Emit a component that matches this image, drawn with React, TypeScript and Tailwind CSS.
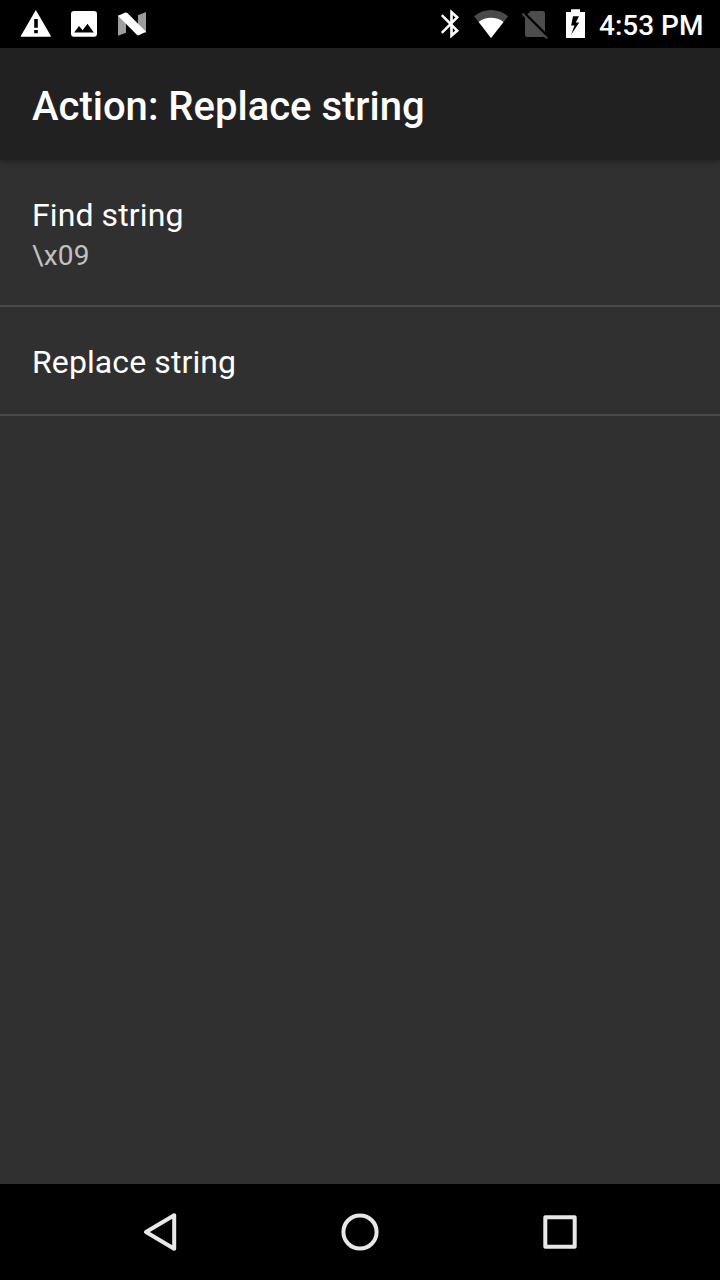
import React from "react";

function StatusBar() {
  return (
    <header className="flex h-12 shrink-0 items-center justify-between bg-black pr-4 text-white">
      <div className="flex h-12 pl-3">
        <svg className="h-12 w-12" viewBox="12 0 48 48" fill="currentColor" aria-label="Warning">
          <path fillRule="evenodd" d="M35.8 10 L50.9 36.1 Q51 36.8 50.2 36.8 H21.4 Q20.6 36.8 20.8 36 Z M34.2 19 H37.8 V27.8 H34.2 Z M34.2 30 H37.8 V33.2 H34.2 Z" />
        </svg>
        <svg className="h-12 w-12" viewBox="60 0 48 48" fill="currentColor" aria-label="Screenshot">
          <path fillRule="evenodd" d="M74 11 H94 Q97 11 97 14 V33.8 Q97 36.8 94 36.8 H74 Q71 36.8 71 33.8 V14 Q71 11 74 11 Z M74.2 32.5 H93.8 L87.5 23.8 L82.6 30.2 L79.1 26 Z" />
        </svg>
        <svg className="h-12 w-12" viewBox="108 0 48 48" fill="currentColor" aria-label="Android N">
          <path fill="#9d9d9d" d="M118 15 L126 22 V32.7 L118 35.8 Z M138 15.2 L146 12 V33 L138 29 Z" />
          <path d="M118 15.8 L125.5 12.4 Q126.6 12.3 127.4 13.1 L146 31.8 L138.8 35.3 Q137.6 35.6 136.8 34.8 Z" />
        </svg>
      </div>
      <div className="flex h-12 items-center">
        <svg className="h-12 w-10" viewBox="430 0 40 48" fill="none" stroke="currentColor" strokeWidth="2.6" aria-label="Bluetooth">
          <path d="M441.8 15.2 L457.2 30.6 L451.5 35.6 V12.2 L457.2 17.4 L441.8 32.8" />
        </svg>
        <svg className="h-12 w-[42px]" viewBox="470 0 42 48" fill="currentColor" aria-label="Wi-Fi">
          <path fill="#4a4a4a" d="M474 16.2 Q482 10 491 10 Q500 10 508.2 16.2 L491 38 Z" />
          <path d="M491 38 L478.7 22 Q484 17.8 491 17.8 Q498 17.8 503.5 22 Z" />
        </svg>
        <svg className="h-12 w-[46px]" viewBox="512 0 46 48" fill="#4d4d4d" aria-label="No SIM">
          <path d="M530.8 11 H542.2 Q545 11 545 13.8 V31.7 L527.3 14.2 Z M525 16.2 L545.2 36.4 Q544.5 37 543 37 H527.6 Q525 37 525 34.2 Z" />
          <path d="M522.5 13.7 L547 38.2" stroke="#4d4d4d" strokeWidth="2.2" />
          <path d="M525.7 14.2 L545.6 34.1" stroke="black" strokeWidth="1.6" />
        </svg>
        <svg className="h-12 w-[41px]" viewBox="558 0 41 48" fill="currentColor" aria-label="Charging">
          <path fillRule="evenodd" d="M571 9.3 H580 V12 H585 V38 H566 V12 H571 Z M573 16.2 L571.2 25.6 H574.5 L571.2 34.4 L579.2 22.5 H575.8 L579 16.2 Z" />
        </svg>
        <time className="w-[105px] pt-1 text-[28px] leading-8 font-medium whitespace-nowrap">4:53 PM</time>
      </div>
    </header>
  );
}

function Preference({ title, summary }: { title: string; summary?: string }) {
  return (
    <li className={`flex flex-col border-b-2 border-[#4a4a4a] pl-8 ${summary ? "h-[147px] pt-9" : "h-[109px] pt-9"}`}>
      <span className="text-[32px] leading-[38px] tracking-[0.1px] text-white">{title}</span>
      {summary && <span className="mt-[5px] text-[28px] leading-[34px] tracking-[0.2px] text-[#c1c1c1]">{summary}</span>}
    </li>
  );
}

function NavigationBar() {
  return (
    <nav className="flex h-24 shrink-0 items-center justify-center gap-[120px] bg-black text-[#e8e8e8]">
      <button aria-label="Back">
        <svg className="size-20" viewBox="120 1192 80 80" fill="none" stroke="currentColor" strokeWidth="4" strokeLinejoin="round">
          <path d="M174.2 1215.3 V1248.7 L146 1232 Z" />
        </svg>
      </button>
      <button aria-label="Home">
        <svg className="size-20" viewBox="320 1192 80 80" fill="none" stroke="currentColor" strokeWidth="4">
          <circle cx="360" cy="1232" r="16.6" />
        </svg>
      </button>
      <button aria-label="Recent apps">
        <svg className="size-20" viewBox="520 1192 80 80" fill="none" stroke="currentColor" strokeWidth="4" strokeLinejoin="round">
          <rect x="545.3" y="1217.3" width="29.4" height="29.4" />
        </svg>
      </button>
    </nav>
  );
}

export default function App() {
  return (
    <div className="flex h-[1280px] w-[720px] flex-col overflow-hidden bg-[#303030] font-['Roboto',sans-serif]">
      <StatusBar />
      <div className="relative flex h-28 shrink-0 items-center bg-[#212121] pt-1.5 pl-8 shadow-[0_2px_6px_rgba(0,0,0,0.3)]">
        <h1 className="text-[40px] leading-[48px] font-medium text-white">Action: Replace string</h1>
      </div>
      <main className="flex-1">
        <ul>
          <Preference title="Find string" summary="\x09" />
          <Preference title="Replace string" />
        </ul>
      </main>
      <NavigationBar />
    </div>
  );
}
